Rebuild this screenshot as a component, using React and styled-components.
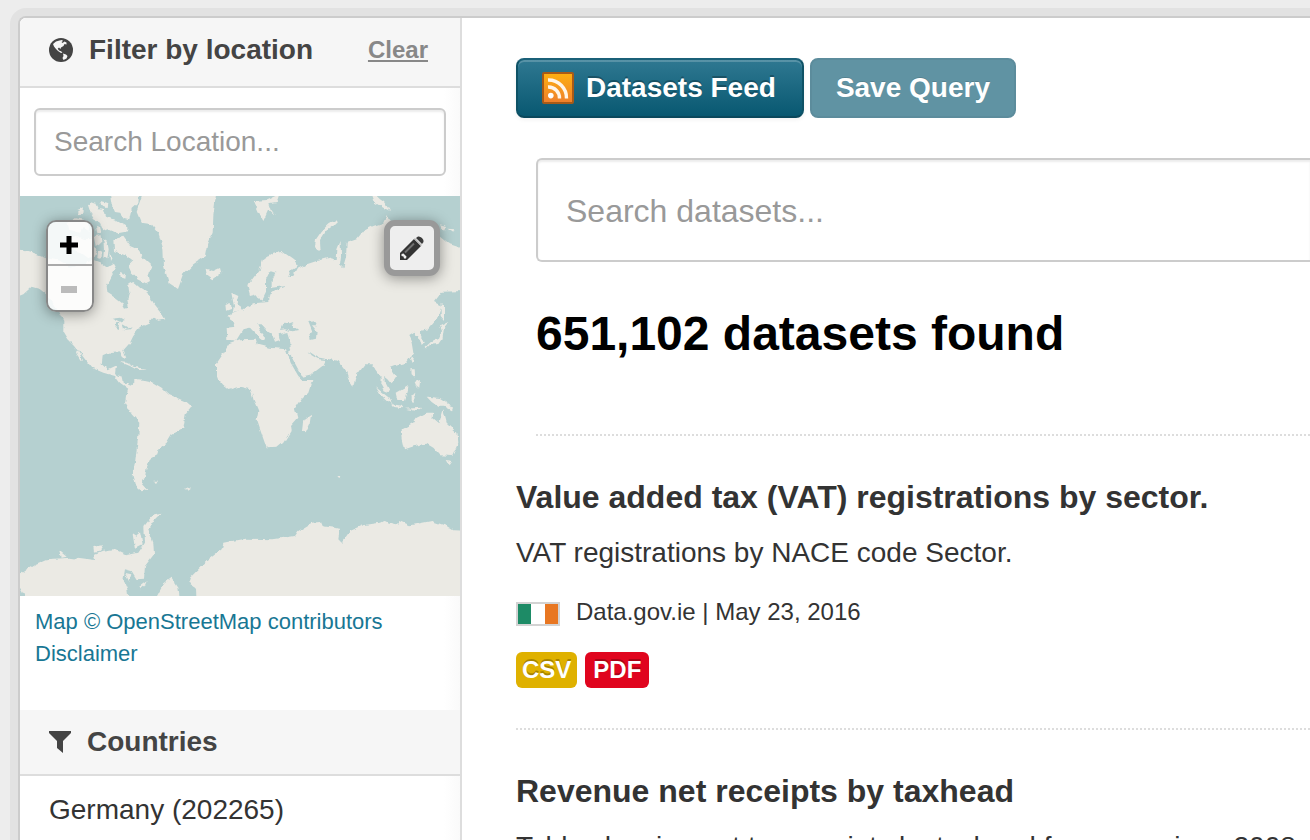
import React from 'react';
import styled, { createGlobalStyle, css } from 'styled-components';

const GlobalStyle = createGlobalStyle`
  *, *::before, *::after { box-sizing: border-box; }
  body {
    margin: 0;
    background: #ededed;
    color: #333;
    font-family: "Liberation Sans", Arial, sans-serif;
    font-size: 28px;
    line-height: 40px;
  }
  h1, h2, h3, p, ul { margin: 0; padding: 0; }
  ul { list-style: none; }
  a { color: inherit; text-decoration: none; }
  button, input { font: inherit; }
`;

const Page = styled.div`
  display: flex;
  height: 100vh;
  overflow: hidden;
  padding: 16px 0 0 18px;
`;

const Card = styled.div`
  display: flex;
  flex: 1;
  min-width: 0;
  background: #fff;
  border: 2px solid #ccc;
  border-width: 2px 0 0 2px;
  border-radius: 8px 0 0 0;
  box-shadow: 0 0 0 8px #e2e2e2;
`;

const Sidebar = styled.aside`
  flex: 0 0 442px;
  border-right: 2px solid #ddd;
  border-top-left-radius: 6px;
  overflow: hidden;
  background: linear-gradient(to left, #fafafa, #fff 16px);
`;

const FilterHeader = styled.h2`
  display: flex;
  align-items: center;
  gap: 16px;
  height: ${(p) => (p.$tall ? '70px' : '66px')};
  padding: ${(p) => (p.$tall ? '0 32px 4px 29px' : '0 32px 0 29px')};
  background: #f6f6f6;
  border-bottom: 2px solid #ddd;
  color: #444;
  font-size: 28px;
  line-height: 36px;

  svg { flex: none; }
`;

const ClearLink = styled.a`
  margin-left: auto;
  color: #888;
  font-size: 24px;
  text-decoration: underline;
`;

const TextInput = styled.input`
  display: block;
  width: 100%;
  border: 2px solid #ccc;
  border-radius: 6px;
  background: #fff;
  color: #555;
  outline: none;
  box-shadow: inset 0 2px 2px rgba(0, 0, 0, 0.075);
  &::placeholder { color: #999; opacity: 1; }

  ${(p) => p.$large ? css`
    height: 104px;
    padding: 2px 28px 0;
    font-size: 32px;
    border-right: 0;
    border-radius: 6px 0 0 6px;
  ` : css`
    height: 68px;
    padding: 0 18px;
    font-size: 28px;
  `}
`;

const LocationForm = styled.form`
  padding: 20px 14px;
`;

const MapBox = styled.div`
  position: relative;
  height: 400px;
  background: #b5d0d0;
  overflow: hidden;
  > svg { display: block; }
`;

const ZoomControls = styled.div`
  position: absolute;
  top: 24px;
  left: 26px;
  width: 48px;
  border: 2px solid #888;
  border-radius: 10px;
  overflow: hidden;
  box-shadow: 0 2px 14px rgba(0, 0, 0, 0.4);
`;

const MapButton = styled.button`
  display: flex;
  align-items: center;
  justify-content: center;
  width: 100%;
  height: 42px;
  padding: 4px 2px 0 0;
  border: 0;
  background: rgba(255, 255, 255, 0.85);
  & + & {
    height: 46px;
    border-top: 2px solid #aaa;
  }
`;

const DrawButton = styled.button`
  position: absolute;
  top: 24px;
  right: 20px;
  display: flex;
  align-items: center;
  justify-content: center;
  width: 56px;
  height: 56px;
  padding: 0;
  border: 6px solid #999;
  border-radius: 11px;
  background: #eee;
  box-shadow: 0 2px 14px rgba(0, 0, 0, 0.4);
`;

const Attribution = styled.div`
  height: 114px;
  padding: 10px 15px;
  color: #187794;
  font-size: 22px;
  line-height: 32px;
  a { display: table; }
`;

const CountryLink = styled.a`
  display: block;
  padding: 14px 29px;
`;

const Main = styled.main`
  flex: 1;
  min-width: 0;
  padding: 40px 0 0 54px;
`;

const Actions = styled.div`
  display: flex;
  gap: 6px;
`;

const Button = styled.button`
  display: flex;
  align-items: center;
  gap: 12px;
  height: 60px;
  padding: ${(p) => (p.$icon ? '0 26px 0 24px' : '0 24px')};
  border: 2px solid #0f4c60;
  border-color: #1a6078 #0e5266 #0a485c;
  border-radius: 8px;
  background: linear-gradient(#2f7891, #085871);
  box-shadow: inset 0 2px 0 rgba(255, 255, 255, 0.2), 0 2px 4px rgba(0, 0, 0, 0.05);
  color: #fff;
  font-weight: bold;
  text-shadow: 0 -2px 0 rgba(0, 0, 0, 0.25);

  &:disabled {
    border-color: #5c8c9c;
    background: #6093a3;
    box-shadow: none;
    text-shadow: 0 -1px 0 rgba(0, 0, 0, 0.12);
  }
`;

const SearchForm = styled.form`
  margin: 40px 0 0 20px;
  height: 278px;
  border-bottom: 2px dotted #ddd;
`;

const ResultCount = styled.h1`
  margin-top: 42px;
  color: #000;
  font-size: 48px;
  line-height: 60px;
`;

const Dataset = styled.li`
  padding: 40px 0;
  border-bottom: 2px dotted #ddd;
`;

const DatasetTitle = styled.h3`
  font-size: 32px;
  line-height: 42px;
`;

const Description = styled.p`
  margin-top: 15px;
  white-space: nowrap;
`;

const Meta = styled.div`
  display: flex;
  align-items: center;
  margin-top: 19px;
  font-size: 24px;
  svg { margin: 4px 16px 0 0; }
`;

const Formats = styled.ul`
  display: flex;
  gap: 8px;
  margin-top: 20px;
`;

const Badge = styled.a`
  display: block;
  height: 36px;
  padding: 0 ${(p) => (p.$wide ? '8px' : '6px')};
  border-radius: 6px;
  background: ${(p) => p.$color};
  color: #fff;
  font-size: 24px;
  font-weight: bold;
  line-height: 36px;
  text-shadow: 0 -2px 0 rgba(0, 0, 0, 0.25);
`;

const GlobeIcon = () => (
  <svg width="24" height="24" viewBox="0 0 24 24" aria-hidden="true">
    <circle cx="12" cy="12" r="12" fill="#444" />
    <g fill="#f6f6f6">
      <path d="M4 6 7 3.5 10.5 2.5 13 2 14 3 12.5 4 13.5 5 15.5 3.5 17.5 4.5 17.5 6.5 15.5 6 14.5 8 12 9.5 11.5 11 10 9.5 8.7 10.7 10 12.5 12 13.2 13.5 14.5 12 15 9 13 7 11 5 8.5Z" />
      <path d="M14 15.5 17 16.5 18.5 18 17.5 20.5 14.5 22 13.5 20 14.5 18Z" />
    </g>
  </svg>
);

const FilterIcon = () => (
  <svg width="22" height="22" viewBox="0 0 22 22" aria-hidden="true">
    <path d="M0 0H22V2L14 10V22L8 17V10L0 2Z" fill="#444" />
  </svg>
);

const PencilIcon = () => (
  <svg width="24" height="24" viewBox="0 0 24 24" aria-hidden="true">
    <path d="M0 24V17L14 3 21 10 7 24Z" fill="#333" />
    <path d="M16 2 18 0.5Q20 0 22 2 24 4 23.5 6L22 8Z" fill="#3a3a3a" />
    <path d="M14.5 2.5 21.5 9.5" stroke="#b5b5b5" strokeWidth="1.5" />
    <path d="M5 16.5 14 7.5" stroke="#707070" strokeWidth="2" />
    <path d="M1.5 18 3.5 17.5 6.5 20.5 6 22.5 4 22.5 3.5 20.5 1.5 20Z" fill="#eee" />
  </svg>
);

const FeedIcon = () => (
  <svg width="32" height="32" viewBox="0 0 32 32" aria-hidden="true">
    <defs>
      <linearGradient id="feed" x1="0" y1="0" x2="0" y2="1">
        <stop offset="0" stopColor="#fdb010" />
        <stop offset="1" stopColor="#ee7f2d" />
      </linearGradient>
    </defs>
    <rect x="1" y="1" width="30" height="30" rx="1" fill="url(#feed)" stroke="#a85a17" strokeWidth="2" />
    <circle cx="8.8" cy="23.6" r="2.8" fill="#fff" />
    <path d="M6 15A11 11 0 0 1 17.5 26.5M6 8A18 18 0 0 1 24.5 26.5" fill="none" stroke="#fff5e8" strokeWidth="3.4" />
  </svg>
);

const IrishFlag = () => (
  <svg width="44" height="24" viewBox="0 0 44 24" role="img" aria-label="Ireland">
    <rect width="44" height="24" fill="#d3d3d3" />
    <rect x="2" y="2" width="13" height="20" fill="#1d8b66" />
    <rect x="15" y="2" width="14" height="20" fill="#fff" />
    <rect x="29" y="2" width="13" height="20" fill="#e87722" />
  </svg>
);

const WorldMap = () => (
  <svg width="440" height="400" viewBox="0 0 1320 1200" role="img" aria-label="World map">
    <defs>
      <filter id="coast" x="-20" y="-20" width="1360" height="1240" filterUnits="userSpaceOnUse" colorInterpolationFilters="sRGB">
        <feTurbulence type="fractalNoise" baseFrequency="0.05" numOctaves="2" seed="4" />
        <feDisplacementMap in="SourceGraphic" scale="14" xChannelSelector="R" yChannelSelector="G" />
        <feGaussianBlur stdDeviation="1.6" />
      </filter>
    </defs>
    <g filter="url(#coast)" fill="#ebeae4">
      {/* North America */}
      <path d="M-30 150-10 158 35 172 75 185 120 195 150 212 190 205 218 190 245 200 262 212 282 200 290 215 275 240 260 270 262 290 285 305 305 320 315 338 326 335 322 310 328 290 325 265 340 258 360 275 385 290 400 320 420 345 436 370 415 374 400 365 385 385 360 395 340 420 330 440 310 463 319 487 308 482 300 466 270 468 248 478 245 505 262 520 288 508 285 535 308 543 312 560 334 570 325 578 300 560 285 540 250 530 215 515 195 490 165 450 145 430 130 405 130 375 115 345 85 300 60 280 35 272 10 295-30 310Z" />
      <path d="M163 455 175 468 190 494 182 492 170 474Z" />
      <path d="M300 498 320 500 345 513 380 520 360 523 345 518 330 510Z" />
      {/* Canadian Arctic */}
      <path d="M280 130 310 122 330 150 352 160 370 185 397 210 385 235 390 255 378 262 355 250 335 232 325 210 340 195 320 180 300 172 282 165Z" />
      <path d="M268-20 358-20 355 20 335 38 328 70 312 66 300 50 285 48 275 25Z" />
      <path d="M210 18 228 24 236 40 252 42 258 62 285 72 322 92 322 106 290 112 262 100 250 106 240 80 222 70 212 52Z" />
      <path d="M172 42 192 34 190 50 172 58ZM204 28 216 20 222 44 210 46ZM240 15 262 20 260 34 244 28Z" />
      <path d="M140 82 165 66 195 72 208 84 206 104 188 96 180 110 160 104 145 102Z" />
      <path d="M150 126 170 120 195 130 218 128 214 148 232 160 225 182 205 186 185 172 165 166Z" />
      <path d="M228 86 240 92 244 110 232 112ZM224 120 242 118 244 140 230 150ZM250 130 262 138 266 160 262 190 250 182 252 160ZM268 168 276 186 270 198Z" />
      <path d="M300 228 318 234 316 248 302 244ZM234 165 246 172 244 188 232 186Z" />
      {/* Greenland, Iceland and the British Isles */}
      <path d="M372-20 350 45 365 80 395 85 415 110 430 160 432 210 446 260 474 279 490 235 520 205 555 180 562 145 578 110 580 60 590-20Z" />
      <path d="M557 218 580 225 600 216 604 232 580 250 560 235Z" />
      <path d="M634 290 655 300 650 318 668 345 638 350 642 330ZM616 324 632 318 635 338 618 344Z" />
      {/* South America */}
      <path d="M315 620 318 600 325 575 350 553 375 555 400 560 425 575 445 595 500 618 516 632 497 655 490 695 455 715 440 740 415 760 412 778 390 790 380 815 376 840 366 865 382 882 365 886 345 868 338 840 345 800 355 720 358 680 335 655Z" />
      <path d="M400 854 414 854 408 865ZM496 874 510 878 502 884Z" />
      {/* Antarctica */}
      <path d="M-30 1138 0 1134 20 1120 45 1105 80 1090 150 1085 225 1095 222 1075 245 1065 280 1060 320 1078 355 1070 375 1040 373 990 400 955 425 950 404 970 385 1000 400 1040 402 1075 375 1110 372 1148 350 1150 335 1125 315 1120 310 1150 322 1180 328 1230 30 1230 0 1175-30 1150Z" />
      <path d="M338 1015 350 1022 360 1006 368 1045 345 1057ZM220 1052 250 1048 240 1064 222 1067ZM118 1064 140 1082 122 1086ZM316 1134 334 1138 328 1157ZM358 1172 380 1156 374 1170 362 1180Z" />
      <path d="M395 1230 430 1165 455 1145 475 1175 482 1230Z" />
      <path d="M530 1230 528 1175 505 1160 510 1145 560 1095 605 1060 610 1040 640 1034 675 1028 760 1030 825 1020 835 1005 875 980 900 978 905 990 960 998 955 1030 965 1040 990 1005 1030 988 1080 980 1090 975 1130 985 1140 975 1170 988 1200 982 1235 975 1280 990 1300 1003 1350 1005 1350 1230Z" />
      <g transform="translate(660 0)">
        {/* Europe and Asia */}
        <path d="M-40 395-38 430-12 434 0 415 10 400 30 395 42 408 60 425 72 435 76 424 60 402 52 385 62 385 78 402 95 415 105 440 120 435 116 415 145 408 150 432 152 455 147 470 162 500 185 542 215 535 250 508 257 492 235 490 215 478 206 466 235 485 270 490 295 495 315 520 325 550 340 572 345 545 375 505 395 505 410 525 425 545 424 565 438 590 448 585 435 560 432 540 445 550 455 562 468 542 450 515 470 508 500 500 520 470 515 440 505 420 520 410 540 430 545 447 554 437 540 405 565 400 590 370 605 330 582 318 605 287 690 285 690 165 630 145 600 120 560 105 500 80 455 78 440 58 430 80 400 90 370 105 350 130 320 140 318 185 310 214 300 205 303 180 302 135 292 160 290 192 265 185 230 195 200 205 170 220 160 240 145 240 150 225 175 210 160 190 125 165 100 170 70 190 60 220 40 245 22 270 30 300 50 295 65 317 78 290 78 250 90 225 106 230 95 255 95 275 137 270 110 282 85 300 85 318 40 322 20 332 0 345-15 350-38 362-20 375-14 392Z" />
        <path d="M225 150 228 130 245 105 265 85 290 70 293 80 258 105 240 135 242 165 226 158Z" />
        <path d="M42 15 80 12 118-5 110 18 85 22 92 42 105 60 85 42 70 75 55 45ZM390-20 420 10 432 18 450 45 430 35 405 20Z" />
        <path d="M600 85 618 90 612 105ZM622 98 644 100 640 110Z" />
        {/* Africa */}
        <path d="M-30 440 0 430 45 428 50 445 90 455 138 460 152 500 175 540 188 552 217 552 205 590 185 610 165 640 172 665 150 690 152 705 130 740 112 755 80 757 60 700 50 670 55 645 40 610 38 600 30 580 0 572-35 582-55 565-72 540-72 505-55 480Z" />
        <path d="M216 653 212 680 197 712 186 705 190 672Z" />
        {/* Japan and the Pacific islands */}
        <path d="M554 455 575 436 597 425 606 405 600 390 625 378 612 395 608 425 595 444 570 446 556 460ZM602 320 612 330 612 372 602 360Z" />
        <path d="M512 485 522 482 518 502ZM514 520 524 520 526 545 515 535ZM524 558 540 552 538 575 528 568Z" />
        <path d="M408 574 425 588 447 605 458 625 440 612 420 594ZM452 624 490 630 488 637 458 632ZM470 590 505 570 503 588 495 612 475 612ZM512 600 530 590 520 606 522 620 512 618ZM495 638 545 635 530 645Z" />
        <path d="M560 602 580 604 600 606 625 622 640 645 615 632 595 632 575 618Z" />
        {/* Australia */}
        <path d="M485 700 520 680 530 665 560 650 580 650 578 665 598 682 610 643 620 680 652 710 655 740 637 780 600 778 580 755 560 743 530 748 495 760 488 730ZM617 792 635 794 626 808ZM292 840 301 840 298 847Z" />
      </g>
    </g>
    <g filter="url(#coast)" fill="#b5d0d0">
      {/* Inland seas and lakes */}
      <path d="M780 402 790 380 808 382 820 378 815 388 835 402 815 406 795 400Z" />
      <path d="M862 378 885 376 892 388 876 388 890 405 888 428 872 432 868 412 874 408Z" />
      <path d="M805 470 812 478 848 545 842 545 815 500Z" />
      <path d="M275 368 300 365 312 372 295 378ZM288 382 298 380 294 402 286 398ZM305 382 325 392 322 398 308 392ZM310 402 335 394 330 400Z" />
    </g>
  </svg>
);

const submit = (event) => event.preventDefault();

export default function App() {
  return (
    <>
      <GlobalStyle />
      <Page>
        <Card>
          <Sidebar>
            <section>
              <FilterHeader $tall>
                <GlobeIcon />
                Filter by location
                <ClearLink href="#clear">Clear</ClearLink>
              </FilterHeader>
              <LocationForm onSubmit={submit}>
                <TextInput type="text" aria-label="Search Location" placeholder="Search Location..." />
              </LocationForm>
              <MapBox>
                <WorldMap />
                <ZoomControls>
                  <MapButton aria-label="Zoom in">
                    <svg width="18" height="18" viewBox="0 0 18 18" aria-hidden="true">
                      <path d="M6.5 0h5v6.5H18v5h-6.5V18h-5v-6.5H0v-5h6.5z" />
                    </svg>
                  </MapButton>
                  <MapButton aria-label="Zoom out">
                    <svg width="16" height="8" viewBox="0 0 16 8" aria-hidden="true">
                      <path d="M0 0h16v7H0z" fill="#bbb" />
                    </svg>
                  </MapButton>
                </ZoomControls>
                <DrawButton aria-label="Draw an area">
                  <PencilIcon />
                </DrawButton>
              </MapBox>
              <Attribution>
                <a href="#map">Map © OpenStreetMap contributors</a>
                <a href="#disclaimer">Disclaimer</a>
              </Attribution>
            </section>
            <section>
              <FilterHeader>
                <FilterIcon />
                Countries
              </FilterHeader>
              <CountryLink href="#germany">Germany (202265)</CountryLink>
            </section>
          </Sidebar>
          <Main>
            <Actions>
              <Button $icon>
                <FeedIcon />
                Datasets Feed
              </Button>
              <Button disabled>Save Query</Button>
            </Actions>
            <SearchForm onSubmit={submit}>
              <TextInput $large type="search" aria-label="Search datasets" placeholder="Search datasets..." />
              <ResultCount>651,102 datasets found</ResultCount>
            </SearchForm>
            <ul>
              <Dataset>
                <DatasetTitle><a href="#vat">Value added tax (VAT) registrations by sector.</a></DatasetTitle>
                <Description>VAT registrations by NACE code Sector.</Description>
                <Meta>
                  <IrishFlag />
                  <span>Data.gov.ie | May 23, 2016</span>
                </Meta>
                <Formats>
                  <li><Badge href="#csv" $color="#dfb100">CSV</Badge></li>
                  <li><Badge href="#pdf" $color="#e0051e" $wide>PDF</Badge></li>
                </Formats>
              </Dataset>
              <Dataset>
                <DatasetTitle><a href="#revenue">Revenue net receipts by taxhead</a></DatasetTitle>
                <Description>Table showing net tax receipts by taxhead for years since 2008</Description>
              </Dataset>
            </ul>
          </Main>
        </Card>
      </Page>
    </>
  );
}
